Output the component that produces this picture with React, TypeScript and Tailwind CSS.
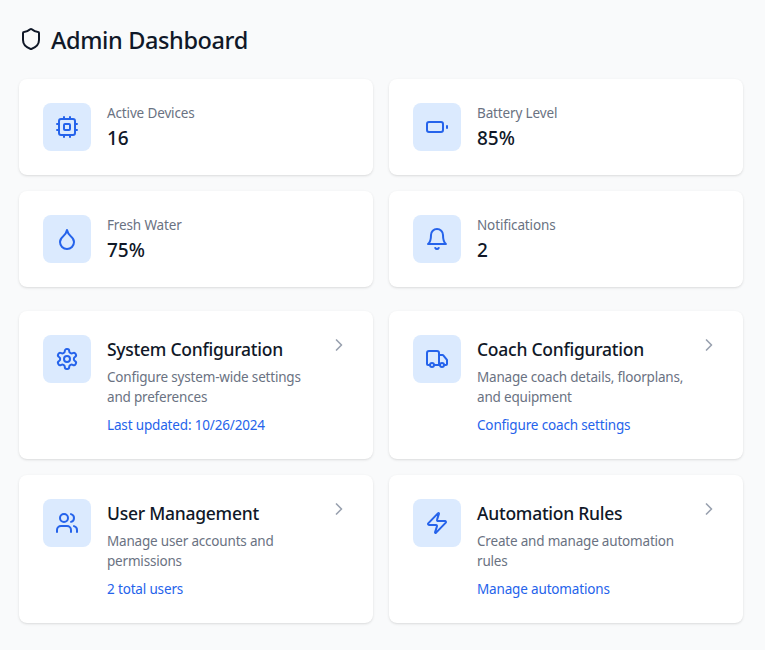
import React from 'react';
import { Droplet, Truck, Users, ChevronRight } from 'lucide-react';

const stroke = {
  viewBox: '0 0 24 24',
  fill: 'none',
  stroke: 'currentColor',
  strokeWidth: 2,
  strokeLinecap: 'round',
  strokeLinejoin: 'round',
} as const;

type IconType = React.ComponentType<{ className?: string }>;

const Shield: IconType = ({ className }) => (
  <svg {...stroke} className={className}>
    <path d="M20 13c0 5-3.5 7.5-7.66 8.95a1 1 0 0 1-.67-.01C7.5 20.5 4 18 4 13V6a1 1 0 0 1 1-1c2 0 4.5-1.2 6.24-2.72a1.17 1.17 0 0 1 1.52 0C14.51 3.81 17 5 19 5a1 1 0 0 1 1 1z" />
  </svg>
);

const Cpu: IconType = ({ className }) => (
  <svg {...stroke} className={className}>
    <rect width="16" height="16" x="4" y="4" rx="2" />
    <rect width="6" height="6" x="9" y="9" rx="1" />
    <path d="M15 2v2M15 20v2M2 15h2M2 9h2M20 15h2M20 9h2M9 2v2M9 20v2" />
  </svg>
);

const Battery: IconType = ({ className }) => (
  <svg {...stroke} className={className}>
    <rect width="16" height="10" x="2" y="7" rx="2" />
    <path d="M22 11v2" />
  </svg>
);

const Bell: IconType = ({ className }) => (
  <svg {...stroke} className={className}>
    <path d="M6 8a6 6 0 0 1 12 0c0 7 3 9 3 9H3s3-2 3-9" />
    <path d="M10.3 21a1.94 1.94 0 0 0 3.4 0" />
  </svg>
);

const Settings: IconType = ({ className }) => (
  <svg {...stroke} className={className}>
    <path d="M12.22 2h-.44a2 2 0 0 0-2 2v.18a2 2 0 0 1-1 1.73l-.43.25a2 2 0 0 1-2 0l-.15-.08a2 2 0 0 0-2.73.73l-.22.38a2 2 0 0 0 .73 2.73l.15.1a2 2 0 0 1 1 1.72v.51a2 2 0 0 1-1 1.74l-.15.09a2 2 0 0 0-.73 2.73l.22.38a2 2 0 0 0 2.73.73l.15-.08a2 2 0 0 1 2 0l.43.25a2 2 0 0 1 1 1.73V20a2 2 0 0 0 2 2h.44a2 2 0 0 0 2-2v-.18a2 2 0 0 1 1-1.73l.43-.25a2 2 0 0 1 2 0l.15.08a2 2 0 0 0 2.73-.73l.22-.39a2 2 0 0 0-.73-2.73l-.15-.08a2 2 0 0 1-1-1.74v-.5a2 2 0 0 1 1-1.74l.15-.09a2 2 0 0 0 .73-2.73l-.22-.38a2 2 0 0 0-2.73-.73l-.15.08a2 2 0 0 1-2 0l-.43-.25a2 2 0 0 1-1-1.73V4a2 2 0 0 0-2-2z" />
    <circle cx="12" cy="12" r="3" />
  </svg>
);

const Zap: IconType = ({ className }) => (
  <svg {...stroke} className={className}>
    <path d="M4 14a1 1 0 0 1-.78-1.63l9.9-10.2a.5.5 0 0 1 .86.46l-1.92 6.02A1 1 0 0 0 13 10h7a1 1 0 0 1 .78 1.63l-9.9 10.2a.5.5 0 0 1-.86-.46l1.92-6.02A1 1 0 0 0 11 14z" />
  </svg>
);

const stats: { icon: IconType; label: string; value: string }[] = [
  { icon: Cpu, label: 'Active Devices', value: '16' },
  { icon: Battery, label: 'Battery Level', value: '85%' },
  { icon: Droplet, label: 'Fresh Water', value: '75%' },
  { icon: Bell, label: 'Notifications', value: '2' },
];

const sections: { icon: IconType; title: string; lines: string[]; link: string }[] = [
  { icon: Settings, title: 'System Configuration', lines: ['Configure system-wide settings', 'and preferences'], link: 'Last updated: 10/26/2024' },
  { icon: Truck, title: 'Coach Configuration', lines: ['Manage coach details, floorplans,', 'and equipment'], link: 'Configure coach settings' },
  { icon: Users, title: 'User Management', lines: ['Manage user accounts and', 'permissions'], link: '2 total users' },
  { icon: Zap, title: 'Automation Rules', lines: ['Create and manage automation', 'rules'], link: 'Manage automations' },
];

function IconTile({ icon: Icon }: { icon: IconType }) {
  return (
    <div className="h-12 w-12 shrink-0 rounded-lg bg-[#dbeafe] p-3 text-[#2563eb]">
      <Icon className="h-6 w-6" />
    </div>
  );
}

export default function App() {
  return (
    <div className="min-h-screen bg-gray-50 pt-6 pr-[22px] pl-[19px] font-['Noto_Sans',sans-serif] text-gray-900">
      <div className="mb-[23px] flex h-8 items-center gap-2">
        <Shield className="mb-0.5 h-6 w-6" />
        <h1 className="text-[23.5px] leading-8 font-medium tracking-[-0.38px] whitespace-nowrap">Admin Dashboard</h1>
      </div>
      <div className="mb-6 grid grid-cols-2 gap-4">
        {stats.map((s) => (
          <div key={s.label} className="flex h-24 items-center gap-4 rounded-lg bg-white p-6 shadow-sm">
            <IconTile icon={s.icon} />
            <div className="pt-px">
              <p className="text-[13.5px] leading-5 tracking-[-0.14px] text-gray-500">{s.label}</p>
              <p className="pt-px text-[19px] leading-7 font-medium">{s.value}</p>
            </div>
          </div>
        ))}
      </div>
      <div className="grid grid-cols-2 gap-4">
        {sections.map((s) => (
          <div key={s.title} className="flex h-[148px] items-start gap-4 rounded-lg bg-white p-6 shadow-sm">
            <IconTile icon={s.icon} />
            <div className="min-w-0 flex-1 whitespace-nowrap">
              <h2 className="text-[17.5px] leading-7 font-medium tracking-[-0.25px]">{s.title}</h2>
              <p className="mt-1 text-[13.5px] leading-5 tracking-[-0.19px] text-gray-500">{s.lines[0]}<br />{s.lines[1]}</p>
              <p className="mt-2 text-[13.5px] leading-5 tracking-[-0.16px] text-[#2563eb]">{s.link}</p>
            </div>
            <ChevronRight className="h-5 w-5 text-gray-400" />
          </div>
        ))}
      </div>
    </div>
  );
}
